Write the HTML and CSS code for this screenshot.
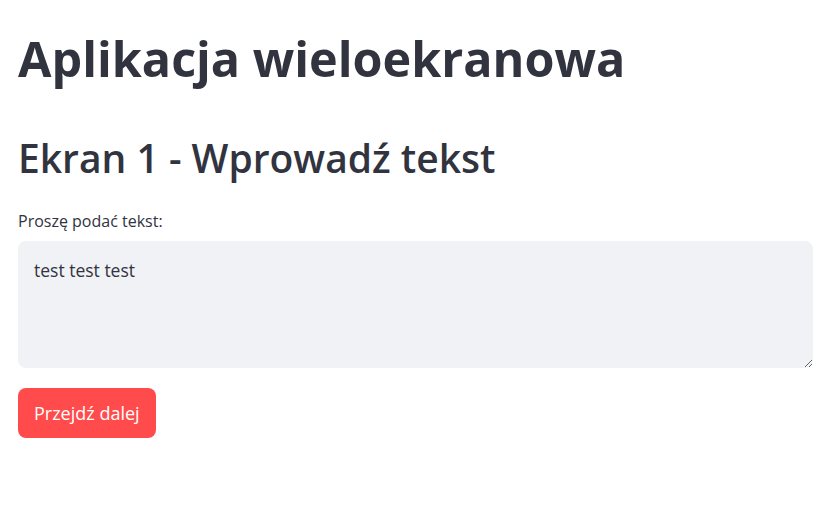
FILE: index.html
```html
<!DOCTYPE html>
<html lang="pl">
<head>
<meta charset="utf-8">
<title>Aplikacja wieloekranowa</title>
<link rel="stylesheet" href="styles.css">
</head>
<body>
<main class="main">
  <h1 class="title">Aplikacja wieloekranowa</h1>
  <h2 class="subtitle">Ekran 1 - Wprowadź tekst</h2>
  <label class="field-label" for="txt">Proszę podać tekst:</label>
  <textarea id="txt" class="field-area">test test test</textarea>
  <button class="btn-primary" type="button">Przejdź dalej</button>
</main>
</body>
</html>
```

FILE: styles.css
```css
html, body {
  margin: 0;
  padding: 0;
  background: #ffffff;
}
body {
  font-family: "Open Sans", "Noto Sans", sans-serif;
  color: #31333f;
}
.main {
  display: flex;
  flex-direction: column;
  align-items: flex-start;
  padding: 29px 18px 0 18px;
}
.title {
  margin: 0;
  font-size: 48.5px;
  font-weight: 700;
  line-height: 58px;
  white-space: nowrap;
  color: #31333f;
}
.subtitle {
  margin: 47px 0 0 0;
  font-size: 39px;
  font-weight: 600;
  line-height: 47px;
  white-space: nowrap;
  color: #31333f;
}
.field-label {
  margin-top: 29px;
  font-size: 16px;
  line-height: 22px;
}
.field-area {
  box-sizing: border-box;
  display: block;
  margin-top: 9px;
  width: 100%;
  height: 127px;
  padding: 15px 16px;
  border: none;
  border-radius: 8px;
  background: #f0f2f6;
  color: #31333f;
  font-family: inherit;
  font-size: 17.5px;
  line-height: 28px;
  outline: none;
}
.btn-primary {
  margin-top: 20px;
  height: 50px;
  padding: 0 16px;
  border: none;
  border-radius: 8px;
  background: #ff4b4b;
  color: #ffffff;
  font-family: inherit;
  font-size: 18px;
}
```
